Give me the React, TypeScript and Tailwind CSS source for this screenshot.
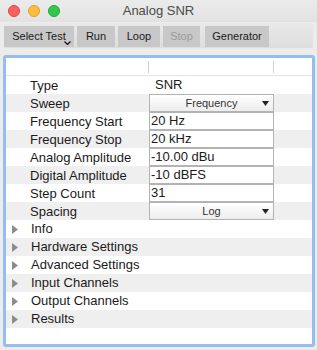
import React from 'react';

const props: { label: string; value: string; kind: 'text' | 'field' | 'select' }[] = [
  { label: 'Type', value: 'SNR', kind: 'text' },
  { label: 'Sweep', value: 'Frequency', kind: 'select' },
  { label: 'Frequency Start', value: '20 Hz', kind: 'field' },
  { label: 'Frequency Stop', value: '20 kHz', kind: 'field' },
  { label: 'Analog Amplitude', value: '-10.00 dBu', kind: 'field' },
  { label: 'Digital Amplitude', value: '-10 dBFS', kind: 'field' },
  { label: 'Step Count', value: '31', kind: 'field' },
  { label: 'Spacing', value: 'Log', kind: 'select' },
];

const groups = ['Info', 'Hardware Settings', 'Advanced Settings', 'Input Channels', 'Output Channels', 'Results'];

function Triangle() {
  return (
    <svg width="6" height="9" viewBox="0 0 6 9" className="shrink-0">
      <polygon points="0,0 6,4.5 0,9" fill="#8c8c8c" />
    </svg>
  );
}

function Value({ value, kind }: { value: string; kind: string }) {
  if (kind === 'text') {
    return <div className="pl-[6px]">{value}</div>;
  }
  if (kind === 'select') {
    return (
      <div className="relative h-full w-[125px] border border-[#b3b3b3] bg-gradient-to-b from-white to-[#ededed] flex items-center justify-center text-[11px] text-[#333]">
        {value}
        <svg width="7" height="5" viewBox="0 0 7 5" className="absolute right-[4px] top-[6px]">
          <polygon points="0,0 7,0 3.5,5" fill="#222" />
        </svg>
      </div>
    );
  }
  return (
    <div className="h-full w-[125px] border border-[#b3b3b3] bg-white flex items-center pl-[1px]">
      {value}
    </div>
  );
}

export default function App() {
  return (
    <div className="w-[317px] h-[350px] bg-[#ececec] font-['Liberation_Sans',Arial,sans-serif] text-[#1a1a1a] overflow-hidden">
      {/* Title bar */}
      <div className="h-[22px] grid grid-cols-[1fr_auto_1fr] items-center bg-gradient-to-b from-[#ebebeb] to-[#e2e2e2]">
        <div className="flex items-center gap-[8px] pl-[8px]">
          <div className="w-[12px] h-[12px] rounded-full bg-[#fc605c] border border-[#e0443e]" />
          <div className="w-[12px] h-[12px] rounded-full bg-[#fdbc40] border border-[#dea123]" />
          <div className="w-[12px] h-[12px] rounded-full bg-[#34c84a] border border-[#1aab29]" />
        </div>
        <div className="text-[13px] text-[#4a4a4a]">Analog SNR</div>
        <div />
      </div>

      {/* Toolbar */}
      <div className="ml-[4px] w-[309px] h-[25px] mt-[1px] bg-gradient-to-b from-[#e9e9e9] to-[#dedede] flex items-end pb-[1px] gap-[3px] text-[11px]">
        <div className="relative w-[70px] h-[21px] bg-[#c8c8c8] flex items-center justify-center">
          Select Test
          <svg width="7" height="4" viewBox="0 0 7 4" className="absolute right-[3px] bottom-[2px]">
            <polyline points="0.5,0.5 3.5,3.5 6.5,0.5" fill="none" stroke="#111" strokeWidth="1.2" />
          </svg>
        </div>
        <div className="w-[38px] h-[21px] bg-[#c8c8c8] flex items-center justify-center">Run</div>
        <div className="w-[42px] h-[21px] bg-[#c8c8c8] flex items-center justify-center">Loop</div>
        <div className="w-[37px] h-[21px] bg-[#c8c8c8] flex items-center justify-center text-[#9a9a9a]">Stop</div>
        <div className="ml-[2px] w-[64px] h-[21px] bg-[#c8c8c8] flex items-center justify-center">Generator</div>
      </div>

      {/* Property panel */}
      <div className="ml-[3px] mt-[7px] w-[312px] h-[292px] border-[3px] border-[#95bdf0] rounded-[3px] bg-white text-[13px] overflow-hidden">
        <div className="h-[18px] border-b border-[#e6e6e6] flex items-center">
          <div className="w-[142px]" />
          <div className="w-px h-[12px] bg-[#cfcfcf]" />
          <div className="w-[124px]" />
          <div className="w-px h-[12px] bg-[#cfcfcf]" />
        </div>
        {props.map((p, i) => (
          <div key={p.label} className={`h-[18px] flex items-center ${i % 2 === 1 ? 'bg-[#efefef]' : 'bg-white'}`}>
            <div className="w-[143px] pl-[24px] leading-none">{p.label}</div>
            <div className="h-full flex items-center">
              <Value value={p.value} kind={p.kind} />
            </div>
          </div>
        ))}
        {groups.map((g, i) => (
          <div key={g} className={`h-[18px] flex items-center pl-[6px] gap-[13px] ${i % 2 === 1 ? 'bg-[#efefef]' : 'bg-white'}`}>
            <Triangle />
            <span>{g}</span>
          </div>
        ))}
      </div>
    </div>
  );
}
